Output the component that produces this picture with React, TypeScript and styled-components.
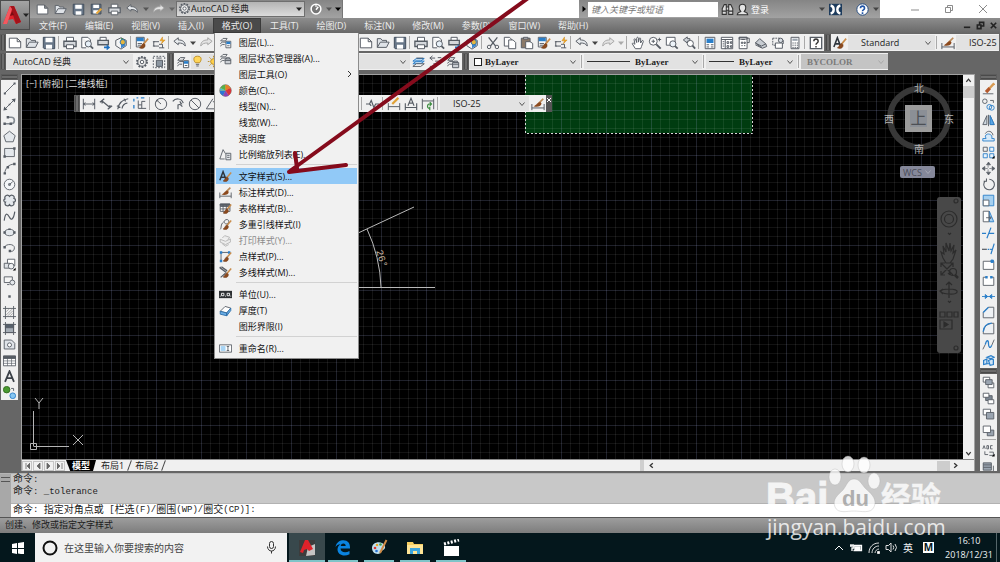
import React from "react";
import styled, { createGlobalStyle, css } from "styled-components";

const UI = `"Open Sans", "Noto Sans CJK SC", sans-serif`;
const CHROME = "#666666";
const PANEL = "#f0f0f0";
const DARK = "#565c64";
const BLUE = "#2b7fc9";

const GlobalStyle = createGlobalStyle`
  * { box-sizing: border-box; }
  html, body { margin: 0; padding: 0; }
  body { background: ${CHROME}; font-family: ${UI}; font-size: 9px; color: #1c1c1c; }
  button, input, select { font: inherit; color: inherit; margin: 0; padding: 0; border: 0; background: none; }
  button { cursor: pointer; }
`;

/* ---------- icons ---------- */

const brush = (
  <>
    <path d="M15 3 L10 9" stroke="#c98c4a" strokeWidth="1.8" />
    <path d="M10 8.500C7 9 8 12 5 13.500C8 15 12 14 11.500 10Z" fill="#8c4a1e" stroke="#6b3612" strokeWidth=".6" />
  </>
);
const layers = <path d="M2 6h6l2-3H5zM2 6v0M1.500 9.500L4 7.500h5M1.500 12.500L4 10.500h3" />;

const ICONS: Record<string, React.ReactNode> = {
  new: <path d="M1.500 2.500h9l4 4v7h-13zM10.500 2.500v4h4" fill="#fff" />,
  open: <path d="M1.500 13V3h4l1.500 2h5v2M1.500 13L5 7h10l-3 6z" fill="#dfe3e8" />,
  save: (
    <>
      <path d="M1.500 1.500h13v13h-12l-1-1z" fill="#687789" stroke="#3f4b59" />
      <path d="M4 2h8v5H4zM4.500 10h7v4.500h-7z" fill="#fff" stroke="none" />
    </>
  ),
  saveas: (
    <>
      <path d="M1.500 1.500h12v12h-12z" fill="#687789" stroke="#3f4b59" />
      <path d="M4 2h7v4H4zM4 9h6v4H4z" fill="#fff" stroke="none" />
      <path d="M8 13L14 7" stroke="#e8a83c" strokeWidth="2.500" />
    </>
  ),
  print: (
    <>
      <path d="M4 6V1.500h8V6" fill="#fff" />
      <path d="M1 6h14v6H1z" fill="#d5d8dc" stroke={DARK} strokeWidth="1.500" />
      <path d="M4 10h8v4.500H4z" fill="#fff" />
    </>
  ),
  preview: (
    <>
      <path d="M2 1.500h7l3 3v4M2 1.500v12h5" fill="#fff" />
      <circle cx="9.500" cy="9" r="3.500" fill="#e7f0f8" />
      <path d="M12 11.500l3 3" strokeWidth="2" />
    </>
  ),
  publish: (
    <>
      <path d="M3.500 5V1.500h7V5" fill="#fff" />
      <path d="M1 5h12v5H1z" fill="#d5d8dc" strokeWidth="1.500" />
      <path d="M8 12h3V9.500l4 3.500-4 3.500V14H8z" fill="#1d6fc0" stroke="none" />
    </>
  ),
  globe: (
    <>
      <path d="M2 5l6-3 6 3v6l-6 4-6-4z" fill="#f4f4f4" />
      <path d="M8 2l5 3-5 3z" fill="#3a9a4c" stroke="none" />
      <path d="M8 8l5-3v6l-5 3z" fill="#3b86d2" stroke="none" />
      <circle cx="10" cy="7" r="3" fill="#e6b53c" stroke="#2a73b4" />
    </>
  ),
  match: (
    <>
      <path d="M1.500 1.500h9v11h-9z" fill="#fff" />
      <path d="M2 2h8v4H2z" fill={BLUE} stroke="none" />
      <path d="M3 8.500h5M3 10.500h4" />
      {brush}
    </>
  ),
  block: (
    <>
      <path d="M2 6.500h6M2 6.500v5h6M1 6.500h2M1 11.500h2M8 13.500h6" />
      <path d="M8 9.500h4v4" />
      <path d="M12 1L9 5.500h3L10.500 9 15 4.500h-3z" fill="#f2ac27" stroke="#c77f12" strokeWidth=".5" />
    </>
  ),
  undo: <path d="M1 6l5-4v2.500c5 0 8 2 8 7-2-3-4-3.500-8-3.500V10z" fill="#e7eaed" />,
  redo: <path d="M15 6l-5-4v2.500c-5 0-8 2-8 7 2-3 4-3.500 8-3.500V10z" fill="#e3e3e3" stroke="#a5a5a5" />,
  cut: (
    <>
      <path d="M3 1.500l8 10M13 1.500l-8 10" strokeWidth="1.500" />
      <circle cx="3.500" cy="12.500" r="2" />
      <circle cx="12.500" cy="12.500" r="2" />
    </>
  ),
  copy: (
    <>
      <path d="M1.500 1.500h6l2 2v8h-8z" fill="#fff" />
      <path d="M6.500 4.500h5l3 3v7h-8z" fill="#fff" />
    </>
  ),
  paste: (
    <>
      <path d="M1.500 2.500h10v11h-10z" fill="#8b7968" />
      <path d="M4 1.500h5v2H4z" fill="#ccc" />
      <path d="M6.500 6.500h5l3 2v6h-8z" fill="#fff" />
    </>
  ),
  pan: <path d="M5 14.500L1.500 9c0-1.500 1.500-1 3 .500L3.500 4c.5-1.500 1.500-1 2 .500l1 3V2.500c.5-1.500 1.500-1.500 2 0v4.500l1-4c.5-1.500 1.500-1 1.500.500L11 8l1.500-2.500c1-1 2 0 1.500 1L12 12l-1 2.500z" fill="#fff" />,
  zoom: (
    <>
      <circle cx="6" cy="6" r="4.500" fill="#fff" />
      <path d="M9.500 9.500l5 5" strokeWidth="2.200" />
      <path d="M6 4v4M4 6h4M11 4h4M13 2v4" />
    </>
  ),
  zoomwin: (
    <>
      <path d="M1.500 1.500h10v9h-10z" fill="#fff" />
      <circle cx="9" cy="9" r="3.500" fill="#eef4fa" />
      <path d="M11.500 11.500l3 3" strokeWidth="2" />
    </>
  ),
  zoomprev: (
    <>
      <path d="M6 1L1.500 4.500 6 8V6h3V3H6z" fill="#cfd4d9" />
      <circle cx="9.500" cy="8.500" r="3.500" fill="#fff" />
      <path d="M12 11l3 3.500" strokeWidth="2" />
    </>
  ),
  props: (
    <>
      <path d="M2.500 1.500h11v13h-11z" fill="#fff" />
      <path d="M4 3h8v5H4z" fill={BLUE} stroke="none" />
      <path d="M4 10h3M4 12.500h3M9 10h3M9 12.500h3" />
    </>
  ),
  center: (
    <>
      <path d="M1.500 1.500h13v13h-13z" fill="#fff" />
      <path d="M1.500 4h13M6 4v11M8 6.500h2v2H8zM12 6.500h1.500v2H12zM8 11h2v2H8zM12 11h1.500v2H12zM3 6.500h2M3 9h2M3 11.500h2" />
    </>
  ),
  palettes: (
    <>
      <path d="M2.500 1.500h9v13h-9z" fill="#fff" />
      <path d="M11.500 2.500h2.500v5h-2.500M5 4h4M5 7h1.500v1.500H5zM8 7h1.500v1.500H8zM5 11h1.500M8 11h1.500M2.500 1.500h9v2h-9z" />
    </>
  ),
  sheets: (
    <>
      <path d="M1.500 8l5-5 7 6 1 3-5 2z" fill="#c7ccd2" />
      <path d="M1.500 8l7 3.500 5-2.500M1.500 10l7 3.500" />
    </>
  ),
  markup: (
    <>
      <path d="M2 2.500h8M2 2.500v8h4" strokeDasharray="2 1" />
      <path d="M5 8h8v6H5zM8 5h6v4" fill="#fff" />
      <circle cx="11" cy="5" r="2.500" fill="#d7dde3" />
    </>
  ),
  calc: (
    <>
      <path d="M3.500 1.500h9v13h-9z" fill="#fff" />
      <path d="M5 3h6v2.500H5z" fill="#9aa4af" stroke="none" />
      <path d="M5 8h1.500M7.500 8H9M10 8h1.500M5 10.500h1.500M7.500 10.500H9M10 10.500h1.500M5 13h1.500M7.500 13H9M10 13h1.500" />
    </>
  ),
  help: (
    <>
      <path d="M1.500 1.500h13v13h-13z" fill="#fff" strokeWidth="1.500" />
      <path d="M5.500 6c0-3.500 5-3.500 5 0 0 2-2.500 2-2.500 4M8 11.500v1.500" stroke="#333" strokeWidth="1.600" />
    </>
  ),
  textstyle: (
    <>
      <path d="M1 12.500L5 2l4 10.500M2.500 9h5" stroke="#2f363d" strokeWidth="1.800" />
      {brush}
    </>
  ),
  dimstyle: (
    <>
      <path d="M1 8v7M15 8v7M1 12.500h14" />
      <path d="M14 2L9 7" stroke="#b98957" strokeWidth="2" />
      <path d="M11 6C7 5.500 7 9 3 10.500c4 1.500 9 0 9-3.500z" fill="#8c4a1e" stroke="none" />
    </>
  ),
  tablestyle: (
    <>
      <path d="M1.500 2.500h12v9h-12zM1.500 5.500h12M5 3v9M9 3v9M1.500 8.500h12" fill="#fff" />
      <path d="M1.500 2.500h12v2h-12z" fill={DARK} />
      {brush}
    </>
  ),
  leaderstyle: (
    <>
      <path d="M1.500 14c2-2 0-6 4-9M6 5c1-4 6-4 6-1s-4 5-6 1z" />
      {brush}
    </>
  ),
  plotstyle: (
    <path d="M4 5l3-3 6 2-2 3M1.500 6.500L8 9l6-3v4l-6 3-6.500-3zM4 12l4 3 4-2" stroke="#b4b4b4" fill="#ececec" />
  ),
  pointstyle: (
    <>
      <path d="M2.500 3v10M2.500 3h10" />
      <path d="M1 1.500h3v3H1zM11 1.500h3v3h-3zM1 12h3v3H1z" fill={BLUE} stroke="none" />
      {brush}
    </>
  ),
  mlstyle: (
    <>
      <path d="M1 2l8 6M3 1l7 5M2 14l6-5M1 1l2 3" strokeWidth="1.600" />
      {brush}
    </>
  ),
  layer: (
    <>
      {layers}
      <path d="M8.500 6.500h6v8h-6z" fill="#fff" />
      <path d="M9 7h5v3H9z" fill={BLUE} stroke="none" />
      <path d="M10 12h3" />
    </>
  ),
  layerstate: (
    <>
      {layers}
      <path d="M7.500 8.500h7v6h-7zM7.500 10.500h7M9 8.500V7h4v1.500" fill="#cdd1d6" />
    </>
  ),
  layerprev: (
    <>
      <path d="M1 10l4-3h9l-4 3zM1 7l4-3h9l-4 3z" fill="#b9d7f0" stroke={BLUE} />
      <path d="M1 13l4-3h9l-4 3z" fill="#fff" />
      <path d="M5 3.500h8" />
    </>
  ),
  layeriso: <path d="M1 3.500h6M4 1l-3 2.500L4 6M7 7h8M5 10h8M1 13h8M10 3h4" />,
  color: (
    <>
      <circle cx="8" cy="8" r="7" fill="#f2c230" stroke="#777" />
      <path d="M8 8V1a7 7 0 0 0-6 4z" fill="#55b04c" stroke="none" />
      <path d="M8 8V1a7 7 0 0 1 6 4z" fill="#e67e2c" stroke="none" />
      <path d="M8 8l6-3a7 7 0 0 1-2 9z" fill="#d8333c" stroke="none" />
      <path d="M8 8l4 6a7 7 0 0 1-7 .500z" fill="#8944b8" stroke="none" />
      <path d="M8 8l-3 6.500A7 7 0 0 1 1 8z" fill="#2b74d6" stroke="none" />
      <path d="M8 8H1a7 7 0 0 1 1-3z" fill="#4cc0c8" stroke="none" />
    </>
  ),
  scale: (
    <>
      <path d="M1 13.500L5 2l3 5M1 13.500h6" />
      <path d="M8.500 6.500h6v8h-6zM10 9h3M10 11.500h3" fill="#e5e8eb" />
    </>
  ),
  units: (
    <>
      <path d="M0 3.500h16v9H0z" fill="#2d3033" stroke="none" />
      <path d="M3 6.500h3v3H3zM10 6.500h3v3h-3zM7.500 10h1M14 10h1M1 10h1" stroke="#fff" />
    </>
  ),
  thick: (
    <>
      <path d="M1.500 9l6-6 7 2-5 6z" fill="#fff" />
      <path d="M1.500 9l8 2v3.500l-8-2zM9.500 11l5-6v3l-5 6.500z" fill="#6aaee6" stroke="#2d6ea8" />
    </>
  ),
  rename: (
    <>
      <path d="M.5 3.500h15v9H.5z" fill="#fff" />
      <path d="M2 5h6v6H2z" fill="#a8d4f4" stroke="none" />
      <path d="M9.500 5.500h3M9.500 10.500h3M11 5.500v5" />
    </>
  ),
  gear: (
    <>
      <circle cx="8" cy="8" r="5.500" strokeDasharray="2 1.450" strokeWidth="2.500" />
      <circle cx="8" cy="8" r="4.800" fill="#eee" />
      <circle cx="8" cy="8" r="2" fill="#fff" />
    </>
  ),
  wssave: (
    <>
      <path d="M1.500 1.500h13v13h-13z" strokeDasharray="2 1.500" />
      <path d="M5 3.500h6M5 6h7v7H5z" fill="#8c96a1" />
    </>
  ),
  bulb: (
    <>
      <path d="M8 1.500c-6 0-5 5.500-2.500 8h5c2.500-2.500 3.500-8-2.500-8z" fill="#ffd65a" stroke="#b8891f" />
      <path d="M6 11.500h4M6.500 13.500h3" />
    </>
  ),
  sun: (
    <>
      <circle cx="8" cy="8" r="3.500" fill="#ffd04a" stroke="#b8891f" />
      <path d="M8 1v2M8 13v2M1 8h2M13 8h2M3 3l1.500 1.500M11.500 11.500L13 13M3 13l1.500-1.500M11.500 4.500L13 3" stroke="#b8891f" />
    </>
  ),
  /* draw tools */
  line: (
    <>
      <path d="M2 14L14 2" />
      <path d="M1 13h2.500v2.500H1zM13 .5h2.500V3H13z" fill={DARK} stroke="none" />
    </>
  ),
  xline: (
    <>
      <path d="M2 14L14 2" />
      <path d="M.5 15.500l1-5 4 4zM15.500.5l-5 1 4 4zM7 7h2v2H7z" fill={DARK} stroke="none" />
    </>
  ),
  pline: (
    <>
      <path d="M2 12h8a4 4 0 0 0 0-8H6" strokeWidth="2" stroke="#858c93" />
      <path d="M.5 10.500h3v3h-3zM8 10.500h3v3H8zM4.500 2.500h3v3h-3z" fill={DARK} stroke="none" />
    </>
  ),
  polygon: <path d="M8 1.500l7 5.500-2.500 7.500h-9L1 7z" fill="#e4e8ec" />,
  rect: (
    <>
      <path d="M2 3h12v10H2z" fill="#e4e8ec" />
      <path d="M12.500 1.500h3v3h-3zM.5 11.500h3v3h-3z" fill={DARK} stroke="none" />
    </>
  ),
  arc: (
    <>
      <path d="M2 14C3 8 6 3 14 2.500" />
      <path d="M.7 12.500h3v3h-3zM4.500 5h3v3h-3zM12.500 1h3v3h-3z" fill={DARK} stroke="none" />
    </>
  ),
  circle: (
    <>
      <circle cx="8" cy="8" r="6.500" fill="#f4f6f8" />
      <path d="M8 8l4-3.500M7 7h2v2H7z" />
    </>
  ),
  cloud: <path d="M8 3C6 0 1 2 2.500 6 0 7 1 10 3 10c-2 4 3 6 5 3 2 3 7 1 5-3 3 0 3-4 .5-4.500C15 2 10 0 8 3z" fill="#e4e8ec" strokeWidth="1.500" />,
  spline: <path d="M1.500 13C3 1 6 5 8 9s5 3 6.500-7" strokeWidth="1.500" />,
  ellipse: (
    <>
      <ellipse cx="8" cy="8" rx="6" ry="4" fill="#e4e8ec" />
      <path d="M.5 6.500h3v3h-3zM12.500 6.500h3v3h-3zM6.500 3h3v2h-3z" fill={DARK} stroke="none" />
    </>
  ),
  ellarc: (
    <>
      <path d="M2 6c2-4 12-4 12 1s-4 5-6 4" />
      <path d="M.5 5h3v3h-3zM7 9.500h3v3H7z" fill={DARK} stroke="none" />
    </>
  ),
  insert: (
    <>
      <path d="M5.500 1.500h9v8h-9z" fill="#fff" />
      <path d="M1.500 6.500h7v6h-7z" fill="#dfe3e7" />
      <circle cx="10" cy="10" r="3.500" fill="#eef0f2" />
      <path d="M15.500 12v3.500H12z" fill="#000" stroke="none" />
    </>
  ),
  makeblock: (
    <>
      <path d="M1.500 3.500h10v7h-10z" fill="#f4f4f4" />
      <circle cx="11.500" cy="10.500" r="3" fill="#e4e8ec" />
      <path d="M5 13h3" />
    </>
  ),
  point: <path d="M6.500 6.500h3v3h-3z" fill={DARK} stroke="none" />,
  hatch: (
    <>
      <path d="M3 0v16M13 0v16M0 3h16M0 13h16" />
      <path d="M4 7l3-3M4 11l7-7M6 12l6-6M9 12l3-3" stroke="#888" strokeWidth=".8" />
    </>
  ),
  gradient: (
    <>
      <path d="M3 3h10v10H3z" fill="#a5adb5" />
      <path d="M3 3h10v4H3z" fill="#56606b" />
      <path d="M3 0v16M13 0v16M0 3h16M0 13h16" />
    </>
  ),
  region: (
    <>
      <path d="M1.500 2.500h9l4 4v7h-13z" fill="#dfe3e8" />
      <circle cx="8" cy="8.500" r="2.500" fill="#fff" />
    </>
  ),
  table: (
    <>
      <path d="M.5 2.500h15v12H.5z" fill="#fff" />
      <path d="M.5 2.500h15v3H.5z" fill={DARK} />
      <path d="M5.500 5v9.500M10.500 5v9.500M.5 8.500h15M.5 11.500h15" strokeWidth=".8" />
    </>
  ),
  mtext: <path d="M2.500 14.500L8 1.500l5.500 13M4.500 10h7" stroke="#3b4148" strokeWidth="2.200" />,
  addsel: (
    <>
      <circle cx="4.500" cy="4.500" r="4" fill="#4a9a30" stroke="#2e6a1c" />
      <circle cx="12" cy="12" r="3.500" fill="#86c6f2" stroke={BLUE} />
      <path d="M10 3h3v3" />
    </>
  ),
  /* modify tools */
  erase: (
    <>
      <path d="M15 1.500L9 8" stroke="#d99b52" strokeWidth="3" />
      <path d="M9.500 7.500L5 12.500" stroke="#b4582b" strokeWidth="4" />
      <path d="M1 14.500h13" />
    </>
  ),
  dup: (
    <>
      <circle cx="3.500" cy="4" r="2.800" />
      <circle cx="9" cy="11" r="3" stroke={BLUE} />
      <circle cx="12" cy="12" r="3" stroke={BLUE} />
      <path d="M10 3h4v3" />
    </>
  ),
  mirror: (
    <>
      <path d="M6 2v11H1zM10 2v11h5z" fill="#cfd8e0" />
      <path d="M10 2v11h5z" fill="#5aa7e6" stroke={BLUE} />
      <path d="M8 1v14" />
    </>
  ),
  offset: (
    <>
      <path d="M1 13.500h14v-3h-3c2-5-6-8-8-3l1 3H1z" stroke={BLUE} fill="#d7eaf9" />
      <path d="M4 4.500c3-5 9-3 9.500 2" />
    </>
  ),
  array: (
    <>
      <path d="M1.500 1.500h5v5h-5z" />
      <path d="M9.500 1.500h5v5h-5zM1.500 9.500h5v5h-5zM9.500 9.500h5v5h-5z" stroke={BLUE} fill="#eaf4fc" />
      <path d="M15.500 12v3.500H12z" fill="#000" stroke="none" />
    </>
  ),
  move: <path d="M8 0l2.500 3.500h-5zM8 16l2.500-3.500h-5zM0 8l3.500-2.500v5zM16 8l-3.500-2.500v5zM7.500 4v3M7.500 9v3M4 8h3M9 8h3" fill={DARK} strokeWidth=".8" />,
  rotate: <path d="M4 3.500a6.500 6.500 0 1 0 5-2M5.500.5v3.500H2" strokeWidth="1.300" />,
  scaleup: (
    <>
      <path d="M1.500 1.500h13v13h-13z" fill="#a6d0f0" stroke={BLUE} />
      <path d="M1.500 7.500h7v7h-7z" fill="#fff" />
    </>
  ),
  stretch: (
    <>
      <path d="M9 1.500l5.500 13H9z" fill="#a6d0f0" stroke={BLUE} />
      <path d="M1.500 1.500h7v13h-7z" fill="#fff" />
      <path d="M5 9.500h6M9 7.500l2.500 2L9 11.500" />
    </>
  ),
  trim: <path d="M0 9h5M8 9h7M11 2L6 15" stroke={BLUE} strokeWidth="1.500" />,
  extend: (
    <>
      <path d="M0 9h6" strokeWidth="1.500" />
      <path d="M7 9h2M10 9h2M15 2l-4 13" stroke={BLUE} strokeWidth="1.500" />
    </>
  ),
  breakpt: (
    <>
      <path d="M1.500 14V4h13v10z" fill="#fff" />
      <path d="M11 2.500h3v3h-3z" fill={BLUE} stroke={BLUE} />
    </>
  ),
  breakit: (
    <>
      <path d="M5 4H1.500v10h13V4H11" fill="#fff" />
      <path d="M4 2.500h3v3H4zM10 2.500h3v3h-3z" fill={BLUE} stroke="none" />
    </>
  ),
  join: <path d="M0 8h16M4 5.500L7 8l-3 2.500zM12 5.500L9 8l3 2.500z" stroke={BLUE} fill={BLUE} />,
  chamfer: (
    <>
      <path d="M1.500 14.500V8L8 1.500h6.500v13z" fill="#eef1f4" />
      <path d="M1.500 8L8 1.500" stroke={BLUE} strokeWidth="1.600" />
    </>
  ),
  fillet: (
    <>
      <path d="M1.500 14.500C1.500 6 6 1.500 14.500 1.500v13z" fill="#eef1f4" />
      <path d="M1.500 12C2 6 6 2 12 1.500" stroke={BLUE} strokeWidth="1.600" />
    </>
  ),
  blend: (
    <>
      <path d="M1 14l3-6M12 9l3-7" />
      <path d="M4 8c2-7 4-5 4-1s2 7 4 2" stroke={BLUE} strokeWidth="1.600" />
    </>
  ),
  explode: <path d="M2 8l4-2v6l-4 1zM6 4l5-2 4 2-4 2zM8 8l4-2 2 1v6l-4 1zM4 12h5" stroke={BLUE} fill="#cfe4f6" strokeWidth="1.500" />,
  front: (
    <>
      <path d="M1.500 1.500h8v6h-8zM7.500 8.500h7v6h-7z" fill="#fff" />
      <path d="M4.500 4.500h8v6h-8z" fill="#9aa4b0" />
    </>
  ),
  back: (
    <>
      <path d="M4.500 4.500h8v6h-8z" fill="#7b8591" />
      <path d="M1.500 1.500h7v5h-7zM7.500 9.500h7v5h-7z" fill="#fff" />
    </>
  ),
  above: (
    <>
      <path d="M1.500 1.500h9v7h-9z" fill="#fff" />
      <path d="M5.500 5.500h9v8h-9z" fill="#9aa4b0" />
    </>
  ),
  below: (
    <>
      <path d="M6.500 7.500h8v7h-8z" fill="#9aa4b0" />
      <path d="M1.500 2.500h9v8h-9z" fill="#fff" />
    </>
  ),
  textfront: (
    <>
      <path d="M1 6l1.500-4L4 6M6 2v4h2V2zM13 2h-2.500v4H13M3.500 9v4h4M9 10h5v4H9" />
      <path d="M15.500 12v3.500H12z" fill="#000" stroke="none" />
    </>
  ),
  hatchback: <path d="M1.500 3.500h10v9h-10zM1.500 6h10M1.500 9h10M14 7v8" fill="#9aa4b0" />,
  /* dimensions */
  dimlin: <path d="M1.500 2v12M14.500 2v12M1.500 8h13M4 6.500L1.500 8 4 9.500M12 6.500L14.500 8 12 9.500" />,
  dimali: <path d="M1 6l5-4M10 14l5-4M3.500 4.500l9 7.500M3.500 4.500v3M12.500 12v-3" strokeWidth="1.400" />,
  dimarc: <path d="M2 14C3 7 7 3 14 2M1 10l4 2M9 2l2 3M7 13c0-3 3-6 6-6" strokeWidth="1.400" />,
  dimord: (
    <>
      <path d="M6 4v9h9M6 9h4M10 13V5h4" />
      <path d="M1 2v3M1 9v4M4 1h2M9 1h4" stroke={BLUE} strokeWidth="1.500" />
    </>
  ),
  dimrad: (
    <>
      <circle cx="8" cy="8" r="6.500" />
      <path d="M8 8L3.500 4M5 3.500H3v2" />
    </>
  ),
  dimjog: <path d="M2 5c3-4 10-4 12 2M8 14V9l4-1-2-3M10 8l3 3" strokeWidth="1.300" />,
  dimdia: (
    <>
      <circle cx="8" cy="8" r="6.500" />
      <path d="M3.500 3.500l9 9" />
    </>
  ),
  dimang: <path d="M14 13.500H1.500L9 2M9 5c3 1 4 4 4 8" />,
  dimbreak: <path d="M0 8h4l2-4 3 8 2-4h4M4 8l2 2" strokeWidth="1.300" />,
  dimedit: (
    <>
      <path d="M1.500 7v8M14.500 7v8M1.500 11h13" />
      <path d="M13 1L6 8" stroke="#e0a238" strokeWidth="2.500" />
    </>
  ),
  dimtext: <path d="M1.500 7v8M14.500 7v8M1.500 12h13M4.500 10L8 1.500l3.500 8.500M6 7h4" strokeWidth="1.300" />,
  dimupd: (
    <>
      <path d="M1.500 2v12M14.500 2v12M1.500 4.500h13" />
      <path d="M11 8c-4-1-5 5-1 5M10 6l2 2-2 2M10 11v4" stroke="#3e8e41" strokeWidth="1.400" />
    </>
  ),
};

const Svg = styled.svg<{ $size: number }>`
  width: ${(p) => p.$size}px;
  height: ${(p) => p.$size}px;
  display: block;
  flex: none;
`;

const Icon = ({ name, size = 14 }: { name: string; size?: number }) => (
  <Svg $size={size} viewBox="0 0 16 16" fill="none" stroke={DARK} strokeWidth="1.100" aria-hidden>
    {ICONS[name]}
  </Svg>
);

const Caret = ({ color = "#222" }: { color?: string }) => (
  <Svg $size={6} viewBox="0 0 6 6" aria-hidden>
    <path d="M0 1.500h6L3 5z" fill={color} />
  </Svg>
);

const Chevron = ({ color = "#555" }: { color?: string }) => (
  <Svg $size={8} viewBox="0 0 8 8" fill="none" stroke={color} aria-hidden>
    <path d="M1.500 2.500L4 5.500l2.500-3" />
  </Svg>
);

/* ---------- frame ---------- */

const Page = styled.div`
  position: relative;
  display: flex;
  flex-direction: column;
  min-height: 100vh;
  overflow: hidden;
  background: ${CHROME};
`;

const Header = styled.header`
  display: flex;
`;

const AppButton = styled.button`
  display: flex;
  align-items: center;
  width: 30px;
  height: 30px;
  border: 1px solid #4c4c4c;
  background: linear-gradient(#a4a4a4, #6f6f6f);
`;

const HeaderRows = styled.div`
  flex: 1;
  min-width: 0;
`;

const TitleBar = styled.div`
  display: flex;
  height: 18px;
  background: #fff;
`;

const QuickAccess = styled.div`
  display: flex;
  align-items: center;
  width: 313px;
  padding-left: 3px;
  background: linear-gradient(#858585, #a2a2a2);
  border-right: 1px solid #777;
`;

const ToolButton = styled.button<{ $narrow?: boolean; $wide?: boolean }>`
  display: flex;
  align-items: center;
  justify-content: center;
  flex: none;
  width: ${(p) => (p.$narrow ? 9 : p.$wide ? 18 : 17)}px;
  height: 16px;
`;

const WorkspaceBox = styled.label`
  display: flex;
  align-items: center;
  flex: 1;
  height: 16px;
  margin: 0 2px 1px 0;
  padding: 0 2px 0 1px;
  border: 1px solid #6f6f6f;
  background: linear-gradient(#b4b4b4, #dcdcdc);
`;

const PlainSelect = styled.select`
  flex: 1;
  min-width: 0;
  height: 100%;
  appearance: none;
  outline: 0;
  opacity: 1;
`;

const TitleGap = styled.div`
  flex: 1;
`;

const InfoCenter = styled.div`
  display: flex;
  align-items: center;
  width: 301px;
  background: linear-gradient(#858585, #a2a2a2);
`;

const SearchBox = styled.input`
  width: 130px;
  height: 15px;
  padding: 0 3px;
  background: #fff;
  font-style: italic;
  &::placeholder { color: #777; opacity: 1; }
`;

const SignIn = styled.button`
  display: flex;
  align-items: center;
  gap: 2px;
  flex: 1;
  color: #fff;
`;

const WindowControls = styled.div`
  display: flex;
  width: 120px;
  padding-left: 18px;
  justify-content: space-between;
`;

const WindowButton = styled.button`
  display: flex;
  align-items: center;
  justify-content: center;
  width: 34px;
`;

const MenuBar = styled.nav`
  display: flex;
  height: 15px;
  background: linear-gradient(#8d8d8d, #686868);
`;

const MenuHost = styled.div`
  position: relative;
`;

const MenuTitle = styled.button<{ $open?: boolean }>`
  display: block;
  height: 15px;
  padding: 0 9px;
  line-height: 15px;
  color: #ececec;
  white-space: nowrap;
  ${(p) => p.$open && css`background: #4a4a4a; box-shadow: inset 0 0 0 1px #3a3a3a;`}
`;

const DocControls = styled.div`
  display: flex;
  margin-left: auto;
`;

const DocButton = styled.button`
  display: flex;
  align-items: center;
  justify-content: center;
  width: 13px;
`;

/* ---------- format menu ---------- */

const Menu = styled.div`
  position: absolute;
  z-index: 10;
  top: 100%;
  left: 1px;
  width: 145px;
  padding: 1px 1px 2px;
  border: 1px solid #8c8c8c;
  border-top: 0;
  background: #f1f1f1;
`;

const MenuItem = styled.button<{ $active?: boolean; $muted?: boolean }>`
  display: flex;
  align-items: center;
  width: 100%;
  height: 16px;
  padding: 0 4px 0 3px;
  text-align: left;
  white-space: nowrap;
  color: ${(p) => (p.$muted ? "#8b8b8b" : "#111")};
  background: ${(p) => (p.$active ? "#91c9f7" : "transparent")};
`;

const MenuIcon = styled.span`
  width: 20px;
`;

const MenuText = styled.span`
  flex: 1;
`;

const MenuRule = styled.hr`
  height: 1px;
  margin: 2px 0 3px 20px;
  border: 0;
  background: #d2d2d2;
`;

type Entry = { icon?: string; text?: string; active?: boolean; muted?: boolean; sub?: boolean };

const formatMenu: Entry[] = [
  { icon: "layer", text: "图层(L)..." },
  { icon: "layerstate", text: "图层状态管理器(A)..." },
  { text: "图层工具(O)", sub: true },
  { icon: "color", text: "颜色(C)..." },
  { text: "线型(N)..." },
  { text: "线宽(W)..." },
  { text: "透明度" },
  { icon: "scale", text: "比例缩放列表(E)..." },
  {},
  { icon: "textstyle", text: "文字样式(S)...", active: true },
  { icon: "dimstyle", text: "标注样式(D)..." },
  { icon: "tablestyle", text: "表格样式(B)..." },
  { icon: "leaderstyle", text: "多重引线样式(I)" },
  { icon: "plotstyle", text: "打印样式(Y)...", muted: true },
  { icon: "pointstyle", text: "点样式(P)..." },
  { icon: "mlstyle", text: "多线样式(M)..." },
  {},
  { icon: "units", text: "单位(U)..." },
  { icon: "thick", text: "厚度(T)" },
  { text: "图形界限(I)" },
  {},
  { icon: "rename", text: "重命名(R)..." },
];

const FormatMenu = () => (
  <Menu role="menu">
    {formatMenu.map((e, i) =>
      e.text ? (
        <MenuItem key={i} role="menuitem" $active={e.active} $muted={e.muted} disabled={e.muted}>
          <MenuIcon>{e.icon && <Icon name={e.icon} size={13} />}</MenuIcon>
          <MenuText>{e.text}</MenuText>
          {e.sub && (
            <Svg $size={8} viewBox="0 0 8 8" fill="none" stroke="#333">
              <path d="M3 1l3 3-3 3" />
            </Svg>
          )}
        </MenuItem>
      ) : (
        <MenuRule key={i} />
      )
    )}
  </Menu>
);

/* ---------- tool bars ---------- */

const Dock = styled.div<{ $last?: boolean }>`
  display: flex;
  padding-top: ${(p) => (p.$last ? 2 : 1)}px;
  padding-bottom: ${(p) => (p.$last ? 4 : 0)}px;
  overflow: hidden;
`;

const Bar = styled.div<{ $width?: number; $grow?: boolean }>`
  display: flex;
  align-items: center;
  flex: ${(p) => (p.$grow ? "1" : "none")};
  width: ${(p) => (p.$width ? p.$width + "px" : "auto")};
  height: 17px;
  margin-right: 1px;
  overflow: hidden;
  background: ${PANEL};
`;

const Grip = styled.span<{ $flat?: boolean }>`
  flex: none;
  ${(p) => (p.$flat ? "width: 100%; height: 6px;" : "width: 6px; height: 100%;")}
  background: repeating-linear-gradient(${(p) => (p.$flat ? "0deg" : "90deg")}, #4a4a4a 0 1px, #6b6b6b 1px 3px);
  border: 1px solid #5c5c5c;
`;

const Divider = styled.span<{ $flat?: boolean }>`
  flex: none;
  ${(p) => (p.$flat ? "width: 14px; height: 1px; margin: 1px 0 2px;" : "width: 1px; height: 13px; margin: 0 2px 0 1px;")}
  background: #a9a9a9;
`;

const Combo = styled.label<{ $width?: number; $pad?: number; $serif?: boolean; $off?: boolean }>`
  display: flex;
  align-items: center;
  gap: 3px;
  flex: none;
  width: ${(p) => p.$width}px;
  height: 15px;
  padding: 0 3px 0 ${(p) => p.$pad ?? 6}px;
  background: ${(p) => (p.$off ? "#c4c4c4" : "#e2e2e2")};
  color: ${(p) => (p.$off ? "#7a7a7a" : "#1c1c1c")};
  ${(p) => p.$serif && css`font-family: "Liberation Serif", serif; font-weight: 700;`}
`;

const Swatch = styled.span`
  width: 8px;
  height: 8px;
  border: 1px solid #222;
  background: #fff;
`;

const LineSample = styled.span<{ $width: number }>`
  width: ${(p) => p.$width}px;
  height: 1px;
  margin-right: 2px;
  background: #333;
`;

type ComboProps = { label: string; value: string; width: number; pad?: number; serif?: boolean; off?: boolean; children?: React.ReactNode };

const ComboBox = ({ label, value, width, pad, serif, off, children }: ComboProps) => (
  <Combo $width={width} $pad={pad} $serif={serif} $off={off}>
    {children}
    <PlainSelect aria-label={label} disabled={off}>
      <option>{value}</option>
    </PlainSelect>
    <Chevron color={off ? "#a8a8a8" : "#555"} />
  </Combo>
);

const Tools = ({ names }: { names: string }) => (
  <>
    {names.split(" ").map((n, i) =>
      n === "|" ? (
        <Divider key={i} />
      ) : n === "v" || n === "w" ? (
        <ToolButton key={i} $narrow aria-label="更多">
          <Caret color={n === "v" ? "#444" : "#aaa"} />
        </ToolButton>
      ) : (
        <ToolButton key={i} aria-label={n}>
          <Icon name={n} />
        </ToolButton>
      )
    )}
  </>
);

const files = "new open save | print preview publish globe |";

/* ---------- work area ---------- */

const WorkArea = styled.main`
  display: flex;
  flex: 1;
  min-height: 340px;
`;

const SideBar = styled.div<{ $fill?: boolean }>`
  display: flex;
  flex-direction: column;
  align-items: center;
  align-self: ${(p) => (p.$fill ? "stretch" : "flex-start")};
  flex: none;
  width: 17px;
  margin: 0 3px 0 1px;
  overflow: hidden;
  background: ${PANEL};
  ${(p) => p.$fill && css`contain: size;`}
`;

const SideTools = ({ names }: { names: string }) => (
  <>
    {names.split(" ").map((n, i) =>
      n === "|" ? (
        <Divider key={i} $flat />
      ) : n === "=" ? (
        <Grip key={i} $flat />
      ) : (
        <ToolButton key={i} aria-label={n}>
          <Icon name={n} size={13} />
        </ToolButton>
      )
    )}
  </>
);

const Document = styled.section`
  display: flex;
  flex-direction: column;
  flex: 1;
  min-width: 0;
  margin-right: 4px;
  border: solid #a2a2a2;
  border-width: 1px 1px 0 1px;
  background: ${PANEL};
`;

const Sheet = styled.div`
  display: flex;
  flex: 1;
`;

const Canvas = styled.div`
  position: relative;
  flex: 1;
  background: #000;
  overflow: hidden;
`;

const Drawing = styled.svg`
  position: absolute;
  inset: 0;
  width: 100%;
  height: 100%;
`;

const Ucs = styled.svg`
  position: absolute;
  left: 4px;
  bottom: 0;
  width: 64px;
  height: 64px;
`;

const ViewLabel = styled.div`
  position: absolute;
  left: 4px;
  top: 2px;
  line-height: 14px;
  color: #dcdcdc;
`;

const FloatingBar = styled.div`
  position: absolute;
  left: 52px;
  top: 20px;
  display: flex;
  align-items: center;
  width: 474px;
  height: 17px;
  background: ${PANEL};
`;

const CloseTab = styled.button`
  align-self: stretch;
  display: flex;
  width: 6px;
  margin-left: auto;
  padding-top: 2px;
  background: #555;
`;

const ViewCube = styled.svg`
  position: absolute;
  top: 4px;
  right: 5px;
  width: 80px;
  height: 84px;
`;

const Wcs = styled.button`
  position: absolute;
  top: 91px;
  right: 28px;
  display: flex;
  align-items: center;
  justify-content: space-between;
  width: 35px;
  height: 12px;
  padding: 0 3px;
  border-radius: 2px;
  background: #85889a;
  color: #4a4c58;
`;

const NavBar = styled.svg`
  position: absolute;
  top: 122px;
  right: 2px;
  width: 24px;
  height: 156px;
`;

const VScroll = styled.div`
  display: flex;
  flex-direction: column;
  align-items: center;
  justify-content: space-between;
  width: 11px;
  padding: 2px 0;
`;

const VThumb = styled.div`
  width: 11px;
  height: 12px;
  margin: 2px 0 auto;
  background: #cdcdcd;
`;

const SheetTabs = styled.div`
  display: flex;
  align-items: center;
  height: 12px;
  border-top: 1px solid #888;
`;

const SheetNav = styled.button`
  display: flex;
  align-items: center;
  justify-content: center;
  width: 10px;
  height: 10px;
  margin-right: 1px;
  border: 1px solid #c4c4c4;
`;

const SheetTab = styled.button<{ $active?: boolean }>`
  height: 11px;
  padding: 0 5px;
  line-height: 10px;
  ${(p) =>
    p.$active
      ? css`color: #fff; background: #000; padding: 0 6px; font-weight: 700; clip-path: polygon(0 0, 100% 0, 90% 100%, 14% 100%);`
      : css`color: #222;`}
`;

const Slash = styled.span`
  width: 1px;
  height: 11px;
  background: #444;
  transform: rotate(20deg);
`;

const HScroll = styled.div`
  display: flex;
  align-items: center;
  width: 334px;
  height: 11px;
  margin-left: auto;
  border-left: 4px solid #cfcfcf;
  padding: 0 15px 0 4px;
`;

const HThumb = styled.div`
  width: 13px;
  height: 10px;
  margin: 0 2px 0 auto;
  background: #cdcdcd;
`;

/* ---------- command line and status ---------- */

const CommandPanel = styled.section`
  display: flex;
  border-top: 1px solid #b4b4b4;
  margin-top: 2px;
`;

const CommandGrip = styled.div`
  width: 11px;
  padding-top: 3px;
  background: #a8a8a8;
  &::before {
    content: "";
    display: block;
    height: 3px;
    margin: 0 1px;
    border: solid #555;
    border-width: 1px 0;
  }
`;

const CommandBody = styled.div`
  flex: 1;
  font-family: "Liberation Mono", "Noto Sans CJK SC", monospace;
  background: #c8c8c8;
`;

const History = styled.div`
  height: 30px;
  padding: 0 2px;
  line-height: 11px;
  border-bottom: 1px solid #b2b2b2;
`;

const CommandRow = styled.label`
  display: flex;
  height: 13px;
  padding: 0 2px;
  line-height: 13px;
  background: #fff;
  white-space: pre;
`;

const CommandInput = styled.input`
  flex: 1;
  outline: 0;
`;

const Han = styled.span`
  font-size: 10px;
`;

const StatusBar = styled.footer`
  height: 16px;
  padding-left: 5px;
  border-top: 1px solid #555;
  line-height: 14px;
  background: linear-gradient(#9d9d9d, #7d7d7d);
`;

/* ---------- task bar ---------- */

const TaskBar = styled.div`
  display: flex;
  height: 29px;
  background: #04171c;
  color: #eef2f3;
`;

const StartButton = styled.button`
  display: flex;
  align-items: center;
  justify-content: center;
  width: 35px;
`;

const TaskSearch = styled.label`
  display: flex;
  align-items: center;
  gap: 6px;
  width: 252px;
  padding: 0 9px 0 7px;
  background: #f2f2f2;
  color: #444;
  font-size: 10px;
  input { flex: 1; min-width: 0; outline: 0; }
  input::placeholder { color: #444; opacity: 1; }
`;

const TaskApp = styled.button<{ $active?: boolean }>`
  display: flex;
  align-items: center;
  justify-content: center;
  width: 36px;
  ${(p) => p.$active && css`background: #38484c;`}
  background-image: linear-gradient(#7fc4c8, #7fc4c8);
  background-repeat: no-repeat;
  background-position: bottom;
  background-size: ${(p) => (p.$active ? "100%" : "30px")} 2px;
`;

const Apps = styled.div`
  display: flex;
  margin-left: 2px;
`;

const Tray = styled.div`
  display: flex;
  align-items: center;
  gap: 5px;
  margin-left: auto;
  font-size: 10px;
`;

const ImeBox = styled.span`
  width: 11px;
  height: 11px;
  margin: 0 5px;
  line-height: 11px;
  text-align: center;
  font-weight: 700;
  background: #fff;
  color: #04171c;
`;

const Clock = styled.time`
  width: 50px;
  margin-right: 2px;
  font-size: 9px;
  line-height: 14px;
  text-align: center;
`;

const ShowDesktop = styled.button`
  width: 4px;
  height: 29px;
  border-left: 1px solid #55666a;
`;

/* ---------- overlays ---------- */

const Arrow = styled.svg`
  position: absolute;
  z-index: 20;
  left: 280px;
  top: 0;
  width: 256px;
  height: 184px;
  pointer-events: none;
`;

const Watermark = styled.svg`
  position: absolute;
  z-index: 20;
  right: 50px;
  bottom: 16px;
  width: 188px;
  height: 96px;
  pointer-events: none;
`;

const menus = ["文件(F)", "编辑(E)", "视图(V)", "插入(I)", "格式(O)", "工具(T)", "绘图(D)", "标注(N)", "修改(M)", "参数(P)", "窗口(W)", "帮助(H)"];

export default function App() {
  return (
    <Page>
      <GlobalStyle />
      <Header>
        <AppButton aria-label="应用程序菜单">
          <Svg $size={22} viewBox="0 0 22 22" aria-hidden>
            <path d="M2 20L9 2h4l7 16-5 2-3-5-5 1-1 4z" fill="#e0232b" />
            <path d="M9 2h4l7 16-5 2z" fill="#a3131a" />
            <path d="M2 20L9 2l2 3-5 15z" fill="#f4585f" />
            <path d="M9 12l2-5 2 4z" fill="#7b0d12" />
          </Svg>
          <Caret />
        </AppButton>
        <HeaderRows>
          <TitleBar>
            <QuickAccess>
              {["new", "open", "save", "saveas", "print", "undo"].map((n) => (
                <ToolButton key={n} $wide aria-label={n}><Icon name={n} size={13} /></ToolButton>
              ))}
              <ToolButton $narrow aria-label="更多"><Caret color="#555" /></ToolButton>
              <ToolButton aria-label="重做"><Icon name="redo" size={13} /></ToolButton>
              <ToolButton $narrow aria-label="更多"><Caret color="#666" /></ToolButton>
              <WorkspaceBox>
                <Icon name="gear" size={13} />
                <PlainSelect aria-label="工作空间"><option>AutoCAD 经典</option></PlainSelect>
                <Caret />
              </WorkspaceBox>
              <ToolButton aria-label="状态">
                <Svg $size={12} viewBox="0 0 16 16" fill="none" stroke="#fff" strokeWidth="2">
                  <circle cx="8" cy="8" r="6.500" fill="#777" />
                  <path d="M8 9l3-4M8 3v2" />
                </Svg>
              </ToolButton>
              <ToolButton $narrow aria-label="更多"><Caret color="#555" /></ToolButton>
              <ToolButton $narrow aria-label="自定义"><Caret color="#000" /></ToolButton>
            </QuickAccess>
            <TitleGap />
            <InfoCenter>
              <ToolButton $narrow aria-label="展开">
                <Svg $size={6} viewBox="0 0 6 6"><path d="M1.500 0v6L5 3z" fill="#000" /></Svg>
              </ToolButton>
              <SearchBox aria-label="搜索" placeholder="键入关键字或短语" />
              <ToolButton $wide aria-label="查找">
                <Svg $size={13} viewBox="0 0 16 16" fill="#ddd" stroke="#333" strokeWidth="1.300">
                  <path d="M1.500 14V7L4 2h2.500v12zM9.500 14V2H12l2.500 5v7zM6.500 5h3v4h-3zM1.500 10h5M9.500 10h5" />
                </Svg>
              </ToolButton>
              <SignIn>
                <Svg $size={13} viewBox="0 0 16 16" fill="#e4e4e4" stroke="#333" strokeWidth="1.300">
                  <path d="M1.500 14.500c0-3 3-3 4.500-4-3-3-3-9 2-9s5 6 2 9c1.500 1 4.500 1 4.500 4z" />
                </Svg>
                登录
              </SignIn>
              <ToolButton $narrow aria-label="更多"><Caret color="#444" /></ToolButton>
              <ToolButton $wide aria-label="Exchange">
                <Svg $size={13} viewBox="0 0 16 16">
                  <path d="M0 1h16v14H0z" fill="#1d3b5c" />
                  <path d="M2 3c5 1 5 9 0 10M14 3c-5 1-5 9 0 10" stroke="#fff" strokeWidth="3" fill="none" />
                </Svg>
              </ToolButton>
              <ToolButton $narrow aria-hidden tabIndex={-1} />
              <ToolButton $wide aria-label="帮助">
                <Svg $size={13} viewBox="0 0 16 16" fill="none">
                  <circle cx="8" cy="8" r="7" fill="#fff" stroke="#234a80" strokeWidth="1.200" />
                  <path d="M5.500 6.500c0-3.500 5-3.500 5 0 0 2-2.500 2-2.500 3.500M8 11.500v2" stroke="#1f54a8" strokeWidth="2" />
                </Svg>
              </ToolButton>
              <ToolButton $narrow aria-label="更多"><Caret color="#444" /></ToolButton>
            </InfoCenter>
            <WindowControls>
              {["M1 6h8", "M1.500 3.500h5v5h-5zM3.500 3.500v-2h5v5h-2", "M1 1l8 8M9 1l-8 8"].map((d) => (
                <WindowButton key={d} aria-label="窗口">
                  <Svg $size={10} viewBox="0 0 10 10" fill="none" stroke="#8b8b8b"><path d={d} /></Svg>
                </WindowButton>
              ))}
            </WindowControls>
          </TitleBar>
          <MenuBar>
            {menus.map((m) => (
              <MenuHost key={m}>
                <MenuTitle $open={m.startsWith("格式")}>{m}</MenuTitle>
                {m.startsWith("格式") && <FormatMenu />}
              </MenuHost>
            ))}
            <DocControls>
              {["M1 7h7", "M1.500 4.500h4v4h-4zM4 4V1.500h4.500v4H6", "M2 2l6 6M8 2L2 8"].map((d) => (
                <DocButton key={d} aria-label="文档窗口">
                  <Svg $size={9} viewBox="0 0 10 10" fill="none" stroke="#222" strokeWidth="1.800"><path d={d} /></Svg>
                </DocButton>
              ))}
            </DocControls>
          </MenuBar>
        </HeaderRows>
      </Header>

      <Dock>
        <Bar $width={350}>
          <Grip />
          <Tools names={files + " match block | undo v redo w"} />
        </Bar>
        <Bar>
          <Grip />
          <Tools names={files + " cut copy paste match block | undo v redo w | pan zoom zoomwin zoomprev | props center palettes sheets markup calc | help"} />
        </Bar>
        <Bar $grow>
          <Grip />
          <Tools names="textstyle" />
          <ComboBox label="文字样式" value="Standard" width={87} pad={13} />
          <Divider />
          <Tools names="dimstyle" />
          <ComboBox label="标注样式" value="ISO-25" width={100} pad={13} />
        </Bar>
      </Dock>
      <Dock $last>
        <Bar $width={167}>
          <Grip />
          <ComboBox label="工作空间" value="AutoCAD 经典" width={127} pad={7} />
          <Tools names="gear wssave" />
        </Bar>
        <Bar $width={294}>
          <Grip />
          <Tools names="layer" />
          <Combo $width={219} $pad={0}>
            <Icon name="bulb" size={13} />
            <Icon name="sun" size={13} />
            <PlainSelect aria-label="图层"><option>0</option></PlainSelect>
            <Chevron />
          </Combo>
          <Tools names="layerprev layeriso layerstate" />
        </Bar>
        <Bar>
          <Grip />
          <ComboBox label="颜色" value="ByLayer" width={111} pad={5} serif><Swatch /></ComboBox>
          <Divider />
          <ComboBox label="线型" value="ByLayer" width={118} pad={3} serif><LineSample $width={43} /></ComboBox>
          <Divider />
          <ComboBox label="线宽" value="ByLayer" width={91} pad={3} serif><LineSample $width={25} /></ComboBox>
          <Divider />
          <ComboBox label="打印样式" value="BYCOLOR" width={87} serif off />
        </Bar>
      </Dock>

      <WorkArea>
        <SideBar>
          <SideTools names="= line xline pline polygon rect arc circle cloud spline ellipse ellarc insert makeblock point hatch gradient region table mtext addsel" />
        </SideBar>
        <Document>
          <Sheet>
            <Canvas>
              <Drawing aria-hidden>
                <defs>
                  <pattern id="grid" x="44" y="35" width="45" height="45" patternUnits="userSpaceOnUse">
                    <path d="M9.500 0v45M18.500 0v45M27.500 0v45M36.500 0v45M0 9.500h45M0 18.500h45M0 27.500h45M0 36.500h45" stroke="#fff" strokeOpacity=".075" />
                    <path d="M.5 0v45M0 .5h45" stroke="#9aa5d8" strokeOpacity=".2" />
                  </pattern>
                </defs>
                <path d="M503 0h227v58H503z" fill="#003c10" />
                <rect width="100%" height="100%" fill="url(#grid)" />
                <path d="M503.500 0v58.500h227V0" fill="none" stroke="#d8d8d8" strokeDasharray="2 2" />
                <g fill="none" stroke="#b9b9b9">
                  <path d="M334 159l58-27M334 212.500h79M345 154q13 28 14 58" />
                </g>
                <text transform="translate(354 176) rotate(72)" fill="#cbb8a0" fontSize="10" fontFamily="Liberation Mono">26°</text>
              </Drawing>
              <ViewLabel>[−] [俯视] [二维线框]</ViewLabel>
              <FloatingBar>
                <Grip />
                <Tools names="dimlin dimali dimarc dimord | dimrad dimjog dimdia dimang dimlin dimlin dimlin | dimlin dimlin dimlin dimrad dimjog | dimbreak | dimedit dimtext dimupd |" />
                <ComboBox label="标注样式" value="ISO-25" width={89} pad={13} />
                <Tools names="dimstyle" />
                <CloseTab aria-label="关闭">
                  <Svg $size={6} viewBox="0 0 6 6" stroke="#fff"><path d="M1 1l4 4M5 1L1 5" /></Svg>
                </CloseTab>
              </FloatingBar>
              <ViewCube viewBox="0 0 80 84" fill="#b4b4b4" fontSize="10" textAnchor="middle">
                <circle cx="41" cy="39" r="29" fill="none" stroke="#383838" strokeWidth="6" />
                <path d="M27 26h27v27H27z" fill="#9b9b9b" />
                <path d="M32 31h17v17H32z" fill="#8b8f96" />
                <text x="40.500" y="45" fontSize="16" fill="#4c4f55">上</text>
                <text x="41" y="13">北</text>
                <text x="41" y="74">南</text>
                <text x="11" y="44">西</text>
                <text x="71" y="44">东</text>
              </ViewCube>
              <Wcs>WCS<Chevron color="#a7a9b5" /></Wcs>
              <NavBar viewBox="0 0 24 156" fill="none" stroke="#2c2c2c" strokeWidth="1.200" aria-hidden>
                <rect width="24" height="156" rx="3" fill="#484848" stroke="none" />
                <circle cx="19" cy="4" r="2" />
                <circle cx="12" cy="22" r="8" />
                <circle cx="12" cy="22" r="4.500" />
                <path d="M11 36l1.500 1.500L14 36M11 104l1.500 1.500L14 104M11 76l1.500 1.500L14 76M6 61L4 55l3 2-1-8 3 6V46l3 8 1-8 1 8 3-6-1 8 3-3-3 9-3 4H9zM4 66l12 12M16 66L4 78M4 70v-4h4M12 66h4v4M4 74v4h4" />
                <circle cx="16" cy="75" r="3.500" />
                <path d="M18 78l3 3" strokeWidth="2.500" />
                <path d="M12 85v16M9 88l3-3 3 3M12 92c12 0 10 6-1 5s-8-5 1-5M6 92l-3 2 3 3M3 115h5v5H3zM10 115h5v5h-5zM17 115h4v5h-4zM3 123h12v9H3z" />
                <path d="M7 125v5l4-2.500z" fill="#2c2c2c" />
                <circle cx="19" cy="151" r="2" />
              </NavBar>
              <Ucs viewBox="0 0 64 64" fill="none" stroke="#b5b5b5" aria-hidden>
                <path d="M7.500 16v35M7.500 51.500H43M4.500 48.500h6v6h-6zM9 3l4 5v6M17 3l-4 5M47 40l10 10M57 40L47 50" />
              </Ucs>
            </Canvas>
            <VScroll>
              <Svg $size={7} viewBox="0 0 8 8" fill="none" stroke="#333" strokeWidth="1.500"><path d="M1.500 5.500L4 2.500l2.500 3" /></Svg>
              <VThumb />
              <Svg $size={7} viewBox="0 0 8 8" fill="none" stroke="#333" strokeWidth="1.500"><path d="M1.500 2.500L4 5.500l2.500-3" /></Svg>
            </VScroll>
          </Sheet>
          <SheetTabs>
            {["M2 0v6M6 0v6L3 3z", "M5 0v6L2 3z", "M1 0v6l3-3z", "M0 0v6l3-3zM5 0v6"].map((d) => (
              <SheetNav key={d} aria-label="布局导航">
                <Svg $size={6} viewBox="0 0 6 6" fill="#666" stroke="#666" strokeWidth=".8"><path d={d} /></Svg>
              </SheetNav>
            ))}
            <SheetTab $active>模型</SheetTab>
            <SheetTab>布局1</SheetTab>
            <Slash />
            <SheetTab>布局2</SheetTab>
            <Slash />
            <HScroll>
              <Svg $size={7} viewBox="0 0 8 8" fill="none" stroke="#333" strokeWidth="1.500"><path d="M5.500 1.500L2.500 4l3 2.500" /></Svg>
              <HThumb />
              <Svg $size={7} viewBox="0 0 8 8" fill="none" stroke="#333" strokeWidth="1.500"><path d="M2.500 1.500L5.500 4l-3 2.500" /></Svg>
            </HScroll>
          </SheetTabs>
        </Document>
        <SideBar $fill>
          <SideTools names="= erase dup mirror offset array move rotate scaleup stretch trim extend breakpt breakit join chamfer fillet blend explode = front back above below | textfront hatchback" />
        </SideBar>
      </WorkArea>

      <CommandPanel>
        <CommandGrip />
        <CommandBody>
          <History>
            <div><Han>命令</Han>:</div>
            <div><Han>命令</Han>: _tolerance</div>
          </History>
          <CommandRow>
            <Han>命令</Han>: <Han>指定对角点或</Han> [<Han>栏选</Han>(F)/<Han>圈围</Han>(WP)/<Han>圈交</Han>(CP)]:
            <CommandInput aria-label="命令" />
          </CommandRow>
        </CommandBody>
      </CommandPanel>
      <StatusBar>创建、修改或指定文字样式</StatusBar>

      <TaskBar>
        <StartButton aria-label="开始">
          <Svg $size={12} viewBox="0 0 12 12" fill="#fff"><path d="M0 2l5-1v5H0zM6 1l6-1v6H6zM0 7h5v5l-5-1zM6 7h6v5.500l-6-1z" /></Svg>
        </StartButton>
        <TaskSearch>
          <Svg $size={16} viewBox="0 0 16 16" fill="none" stroke="#111" strokeWidth="2"><circle cx="8" cy="8" r="6.500" /></Svg>
          <input aria-label="搜索" placeholder="在这里输入你要搜索的内容" />
          <Svg $size={13} viewBox="0 0 13 13" fill="none" stroke="#333"><rect x="4.500" y=".5" width="4" height="7" rx="2" /><path d="M2.500 5.500c0 6 8 6 8 0M6.500 10v2.500" /></Svg>
        </TaskSearch>
        <Apps>
          <TaskApp $active aria-label="AutoCAD">
            <Svg $size={18} viewBox="0 0 18 18">
              <path d="M1 1h16v16H1z" fill="#3c3c3c" />
              <path d="M10 8l7-3v11l-9 1z" fill="#c4c4c4" />
              <path d="M2 13L7 1h3l5 9-4 2-2-2-3 1-1 3z" fill="#e0222a" />
            </Svg>
          </TaskApp>
          <TaskApp aria-label="Edge">
            <Svg $size={16} viewBox="0 0 16 16">
              <path d="M.5 7C1.500 2 5 .3 8.500.3c4.500 0 6.800 3.200 6.500 8.200H5.500c.2 4 5 4.800 9 2.500v3.300C9 17 2.500 15 2.500 9.500c0-2 1-4 3-5.200C3 4.500 1.500 5.500.5 7zM5.700 6h5c0-3.300-4.500-3.300-5 0z" fill="#0a84e0" />
            </Svg>
          </TaskApp>
          <TaskApp aria-label="画图">
            <Svg $size={17} viewBox="0 0 17 17">
              <path d="M1 9c0-5 6-7 10-5 4 2 4 6 1 7-2 1-2 4-5 4-4 0-6-3-6-6z" fill="#bfe0ef" />
              <circle cx="4" cy="9" r="1.300" fill="#d33" /><circle cx="6" cy="6" r="1.300" fill="#e9a92c" />
              <circle cx="9.500" cy="5.500" r="1.300" fill="#3a9a4c" /><circle cx="5.500" cy="12" r="1.300" fill="#2b74d6" />
              <path d="M15.500 1L9 14" stroke="#d08a44" strokeWidth="2" />
            </Svg>
          </TaskApp>
          <TaskApp aria-label="文件资源管理器">
            <Svg $size={16} viewBox="0 0 16 16">
              <path d="M0 2h6l1 2h9v10H0z" fill="#f6cf62" /><path d="M0 5h16v9H0z" fill="#ffe596" />
              <path d="M3 8h10v6h-3v-3H6v3H3z" fill="#3da5dd" />
            </Svg>
          </TaskApp>
          <TaskApp aria-label="视频编辑">
            <Svg $size={17} viewBox="0 0 17 17">
              <path d="M1 7h15v10H1z" fill="#fff" /><path d="M1 5l15-4" stroke="#fff" strokeWidth="3" strokeDasharray="2 1.500" />
            </Svg>
          </TaskApp>
        </Apps>
        <Tray>
          <Svg $size={10} viewBox="0 0 10 10" fill="none" stroke="#fff"><path d="M1 7l4-4 4 4" /></Svg>
          <Svg $size={14} viewBox="0 0 14 14" fill="none" stroke="#fff" strokeWidth="1.300"><path d="M5 4.500h7.500v5H4.500" /><path d="M6 6h5v2.500H6z" fill="#fff" /><path d="M2 3v2M4 3v2M1 5h4v2H3v3" /></Svg>
          <Svg $size={12} viewBox="0 0 12 12" fill="none" stroke="#ddd"><path d="M1 11C1 5 5 1 11 1M4 11c0-4 3-7 7-7M7 11c0-2 2-4 4-4" /><path d="M9.500 9.500h2v2h-2z" fill="#fff" /></Svg>
          <Svg $size={13} viewBox="0 0 13 13" fill="none" stroke="#ddd"><path d="M1 4.500h2.500L6 2v9L3.500 8.500H1zM8 4.500q1.500 2 0 4M10 3q3 3.500 0 7" /></Svg>
          <span>英</span>
          <ImeBox>M</ImeBox>
          <Clock>16:10<br />2018/12/31</Clock>
        </Tray>
        <ShowDesktop aria-label="显示桌面" />
      </TaskBar>

      <Arrow viewBox="0 0 256 184" fill="none" stroke="#850b1c" strokeWidth="4" strokeLinecap="round" aria-hidden>
        <path d="M247 -1L10 171M15 153l2 15M9 172l57-7" />
      </Arrow>
      <Watermark viewBox="0 0 188 96" aria-hidden>
        <g fill="#fff" stroke="#aaa" strokeWidth=".4" opacity=".8">
          <text x="4" y="61" stroke="#fff" strokeWidth="1" fontFamily="Liberation Sans" fontWeight="700" fontSize="40">Bai</text>
          <ellipse cx="73" cy="27" rx="6" ry="8" />
          <ellipse cx="86" cy="14" rx="6" ry="8" />
          <ellipse cx="102" cy="15" rx="6" ry="8" />
          <ellipse cx="112" cy="31" rx="6" ry="8" />
          <path d="M92 29c6 0 7 5 12 10 7 6 11 11 8 18-3 7-13 4-20 4s-16 3-19-4c-3-8 3-12 8-17 4-5 5-11 11-11z" />
          <text x="80" y="56" fill="#a8a8a8" stroke="none" fontFamily="Liberation Sans" fontWeight="700" fontSize="22">du</text>
          <text x="119" y="58" stroke="#fff" fontFamily="Noto Sans CJK SC" fontWeight="700" fontSize="30">经验</text>
          <text x="5" y="85" stroke="none" fontFamily="Open Sans" fontSize="21">jingyan.baidu.com</text>
        </g>
      </Watermark>
    </Page>
  );
}
